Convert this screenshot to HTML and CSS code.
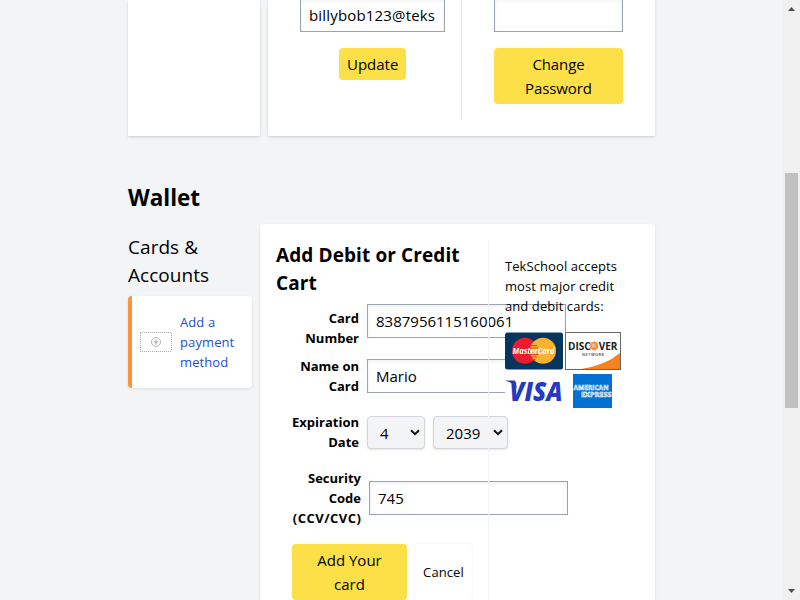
FILE: index.html
```html
<!DOCTYPE html>
<html lang="en">
<head>
<meta charset="utf-8">
<title>Account</title>
<link rel="stylesheet" href="styles.css">
</head>
<body>
<div class="app">
  <main class="page">
    <section class="profile">
      <div class="card profile-photo"></div>
      <div class="card profile-forms">
        <form class="info-form">
          <input class="input" aria-label="Email" value="billybob123@teks">
          <button type="button" class="btn">Update</button>
        </form>
        <form class="password-form">
          <input class="input" aria-label="Password" value="">
          <button type="button" class="btn wide">Change<br>Password</button>
        </form>
      </div>
    </section>

    <h1 class="heading">Wallet</h1>

    <section class="wallet">
      <aside class="side">
        <h2 class="side-title">Cards &amp;<br>Accounts</h2>
        <div class="method">
          <svg class="method-icon" width="32" height="20" viewBox="0 0 32 20">
            <path d="M0 .5h32M0 19.500h32M.5 1v18M31.500 1v18" fill="none" stroke="#aaa" stroke-dasharray="1 1"/>
            <circle cx="16" cy="10" r="4.500" fill="none" stroke="#b5b5b5"/>
            <path d="M13.500 10h5M16 7.500v5" stroke="#aaa" stroke-width="1.200"/>
          </svg>
          <a class="method-link">Add a<br>payment<br>method</a>
        </div>
      </aside>

      <div class="panel">
        <div class="form-col">
          <h2 class="form-title">Add Debit or Credit<br>Cart</h2>
          <form class="card-form">
            <div class="row number-row"><label class="label">Card<br>Number</label><input class="input" value="8387956115160061"></div>
            <div class="row name-row"><label class="label">Name on<br>Card</label><input class="input" value="Mario"></div>
            <div class="row date-row">
              <label class="label">Expiration<br>Date</label>
              <div class="select month"><span>4</span><svg width="10" height="7" viewBox="0 0 10 7"><path d="M1 1.200l4 4 4-4" fill="none" stroke="#111" stroke-width="2"/></svg></div>
              <div class="select year"><span>2039</span><svg width="10" height="7" viewBox="0 0 10 7"><path d="M1 1.200l4 4 4-4" fill="none" stroke="#111" stroke-width="2"/></svg></div>
            </div>
            <div class="row code-row"><label class="label">Security<br>Code<br><span class="code-hint">(CCV/CVC)</span></label><input class="input" value="745"></div>
            <div class="actions">
              <button type="button" class="btn add">Add Your<br>card</button>
              <button type="button" class="cancel">Cancel</button>
            </div>
          </form>
        </div>
        <div class="info-col">
          <p class="info-text">TekSchool accepts<br>most major credit<br>and debit cards:</p>
          <div class="brands">
            <svg width="58" height="38" viewBox="0 0 58 38">
              <rect y=".5" width="58" height="37" rx="2.500" fill="#06365f"/>
              <circle cx="20" cy="18.700" r="13" fill="#eb1c2d"/>
              <circle cx="38" cy="18.700" r="13" fill="#fbb231"/>
              <path d="M26 13.500h6M25 16h8M25 22.500h8M26 25h6M27.500 27.500h3" stroke="#eb3b2b" stroke-width="1.200"/>
              <text class="mc-text" x="7.500" y="21.500" textLength="42" lengthAdjust="spacingAndGlyphs">MasterCard</text>
            </svg>
            <svg width="56" height="38" viewBox="0 0 56 38">
              <rect x=".5" y=".5" width="55" height="37" fill="#fff" stroke="#666"/>
              <path d="M16 37Q41 33 55 21v16z" fill="#f58220"/>
              <text class="disc-text" x="3" y="18" textLength="49.500" lengthAdjust="spacingAndGlyphs">DISC<tspan class="disc-o">O</tspan>VER</text>
              <circle cx="28.900" cy="14" r="4.400" fill="#f7934a"/>
              <circle cx="28.500" cy="13.500" r="2" fill="#fbb98a"/>
              <text class="net-text" x="17" y="23.500" textLength="22" lengthAdjust="spacing">NETWORK</text>
            </svg>
            <svg width="58" height="38" viewBox="0 0 58 38">
              <text class="visa-text" x="4.500" y="28.500" textLength="53" lengthAdjust="spacingAndGlyphs">VISA</text>
              <path d="M1 8.500h9l2 8Q8 10.500 1 9z" fill="#2638c4"/>
            </svg>
            <svg width="56" height="38" viewBox="0 0 56 38">
              <rect x="8" y="2" width="39" height="34" fill="#0070d2"/>
              <text class="amex-text" x="8.500" y="17.600" textLength="35" lengthAdjust="spacingAndGlyphs">AMERICAN</text>
              <text class="amex-text" x="16" y="25" textLength="30.500" lengthAdjust="spacingAndGlyphs">EXPRESS</text>
            </svg>
          </div>
        </div>
      </div>
    </section>
  </main>
  <div class="scrollbar">
    <svg width="7" height="4" viewBox="0 0 7 4"><path d="M0 4L3.500 0 7 4z" fill="#505050"/></svg>
    <div class="thumb"></div>
    <svg class="down" width="7" height="4" viewBox="0 0 7 4"><path d="M0 0L3.500 4 7 0z" fill="#505050"/></svg>
  </div>
</div>
</body>
</html>
```
FILE: styles.css
```css
* { box-sizing: border-box; margin: 0; padding: 0; }
html, body { height: 600px; overflow: hidden; }
body {
  background: #f3f4f6;
  color: #000;
  font: 15px/24px "Open Sans", "Noto Sans", sans-serif;
}
button, input { font: inherit; color: inherit; }
.app { display: flex; height: 600px; overflow: hidden; }
.page { width: 783px; height: 600px; padding-left: 128px; overflow: hidden; }

.profile { display: flex; gap: 8px; width: 527px; height: 136px; }
.card { background: #fff; box-shadow: 0 1px 3px rgba(0,0,0,.1), 0 1px 2px rgba(0,0,0,.06); }
.profile-photo { width: 132px; }
.profile-forms { display: flex; width: 387px; padding-bottom: 16px; }
.info-form, .password-form { display: flex; flex-direction: column; align-items: center; gap: 16px; }
.info-form { width: 194px; padding-left: 16px; border-right: 1px solid #e5e7eb; }
.password-form { width: 193px; }
.info-form .input, .password-form .input { flex: none; margin-top: -2px; }
.info-form .input { width: 145px; letter-spacing: .17px; }
.password-form .input { width: 129px; }
.input {
  width: 199px;
  height: 34px;
  flex: none;
  padding: 0 8px;
  background: #fff;
  border: 1px solid #9ca3af;
  border-radius: 0;
  box-shadow: inset 0 2px 4px rgba(0,0,0,.06);
  outline: 0;
}
.btn { padding: 4px 8px; border: 0; border-radius: 4px; background: #fde047; }
.info-form .btn { width: 67px; }
.wide { width: 129px; letter-spacing: -.1px; }

.heading { margin-top: 46px; font-size: 22.5px; line-height: 32px; font-weight: 700; }
.wallet { display: flex; gap: 8px; margin-top: 10px; width: 527px; }
.side { width: 124px; padding-top: 9px; }
.side-title { font-size: 19px; line-height: 28px; font-weight: 400; letter-spacing: .05px; }
.method {
  display: flex;
  align-items: center;
  gap: 8px;
  height: 92px;
  margin-top: 7px;
  padding-left: 8px;
  background: #fff;
  border-left: 4px solid #fb923c;
  border-radius: 4px;
  box-shadow: 0 1px 3px rgba(0,0,0,.1);
}
.method-link { color: #1d4ed8; font-size: 13px; line-height: 20px; letter-spacing: .1px; }

.panel {
  display: flex;
  width: 395px;
  height: 440px;
  padding: 16px;
  background: #fff;
  border-radius: 4px;
  box-shadow: 0 1px 3px rgba(0,0,0,.1);
}
.form-col { width: 212px; flex: none; }
.form-title { padding-top: 1px; font-size: 19px; line-height: 28px; font-weight: 700; letter-spacing: .1px; white-space: nowrap; }
.card-form { padding-left: 16px; }
.row { display: flex; align-items: center; gap: 8px; }
.number-row { margin-top: 7px; align-items: flex-start; }
.number-row .label { padding-top: 4px; }
.name-row { margin-top: 8px; }
.date-row { height: 40px; margin-top: 16px; }
.code-row { margin-top: 16px; }
.label { width: 67px; flex: none; font-size: 13px; line-height: 20px; font-weight: 700; text-align: right; white-space: nowrap; }
.code-row .label { width: 69px; }
.code-hint { letter-spacing: .5px; margin-right: -.5px; }
.select {
  display: flex;
  flex: none;
  align-items: center;
  justify-content: space-between;
  height: 33px;
  margin-top: 1px;
  padding: 1px 4px 0 12px;
  background: #f3f4f6;
  border: 1px solid #d1d5db;
  border-radius: 4px;
  box-shadow: 0 1px 2px rgba(0,0,0,.1);
}
.select svg { margin-bottom: 2px; }
.month { width: 58px; }
.year { width: 75px; }
.actions { display: flex; gap: 8px; margin-top: 16px; }
.add { width: 115px; height: 56px; flex: none; }
.cancel {
  width: 57px;
  flex: none;
  background: #fff;
  border: 0;
  border-radius: 4px;
  box-shadow: 0 0 2px rgba(0,0,0,.1);
  font-size: 13px;
  letter-spacing: .1px;
}
.info-col { position: relative; width: 151px; flex: none; padding: 16px 0 0 16px; border-left: 1px solid #f3f4f6; }
.info-text { font-size: 13px; line-height: 20px; letter-spacing: .08px; white-space: nowrap; }
.brands { display: grid; grid-template-columns: 58px 56px; gap: 2px; width: 116px; margin-top: 16px; padding-bottom: 2px; background: #fff; }
.brands svg { display: block; overflow: visible; }
.mc-text { font: italic 700 8px "Open Sans", sans-serif; fill: #fff; }
.disc-text { font: 700 11px "Open Sans", sans-serif; fill: #222; }
.disc-o { fill: #f7934a; }
.net-text { font: 600 3.8px "Open Sans", sans-serif; fill: #333; }
.visa-text { font: italic 800 27px "Open Sans", sans-serif; fill: #2638c4; }
.amex-text { font: 700 7px "Open Sans", sans-serif; fill: #4b9ce2; stroke: #fff; stroke-width: .5px; }

.scrollbar { display: flex; flex-direction: column; align-items: center; width: 17px; height: 600px; padding: 7px 0; background: #f0f0f0; }
.thumb { width: 13px; height: 235px; margin-top: 162px; background: #c1c1c1; }
.down { margin-top: auto; }
```
